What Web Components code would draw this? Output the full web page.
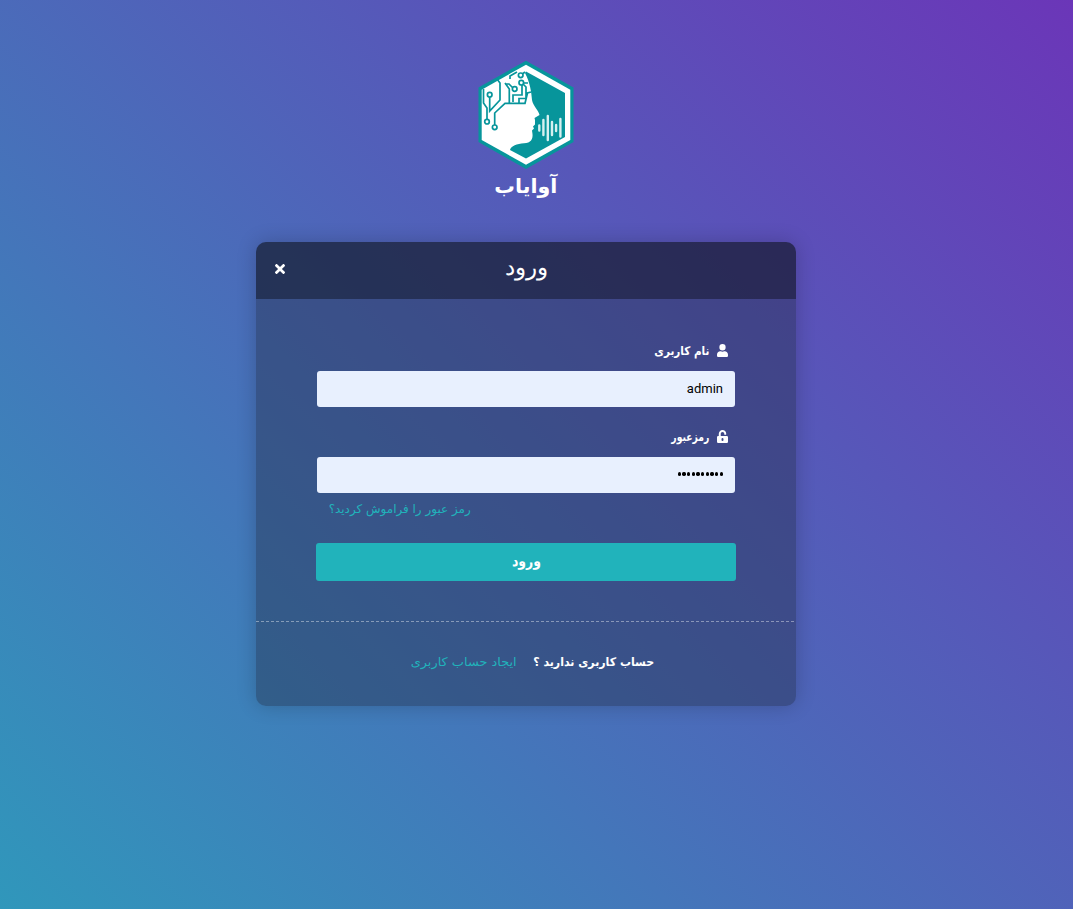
<!DOCTYPE html>
<html lang="fa" dir="rtl">
<head>
<meta charset="utf-8">
<title>ورود</title>
<style>
html{height:100%}
body{margin:0;min-height:100%;font-family:"DejaVu Sans","Liberation Sans",sans-serif;color:#fff;background:linear-gradient(45deg,#3097bb,#6b36b8) no-repeat;height:909px;overflow:hidden}
</style>
</head>
<body>
<login-page></login-page>
<script>
const define = (name, html, ready) => {
  const t = document.createElement('template');
  t.innerHTML = html;
  customElements.define(name, class extends HTMLElement {
    constructor() {
      super();
      this.attachShadow({mode: 'open'}).append(t.content.cloneNode(true));
    }
    connectedCallback() { if (ready) ready(this, this.shadowRoot); }
  });
};

/* Text condensed or widened to a set measure */
define('fit-text', `<style>
:host{display:block;white-space:nowrap;flex:none}
span{display:inline-block;transform-origin:100% 50%}
</style><span><slot></slot></span>`, (host, root) => {
  const w = parseFloat(host.getAttribute('width'));
  const span = root.querySelector('span');
  host.style.width = w + 'px';
  span.style.transform = 'scaleX(' + w / span.getBoundingClientRect().width + ')';
});

define('brand-logo', `<style>
:host{display:flex;flex-direction:column;align-items:center;height:182px}
svg{display:block}
fit-text{font-size:20px;font-weight:700;line-height:28px;margin-top:2px}
</style>
<svg width="96" height="110" viewBox="0 0 96 110">
<path d="M48 .7 95.500 27.500V82L48 109 .500 82V27.500Z" fill="#07959b"/>
<path d="M48 4.700 92.300 29.700V80L48 104.700 3.700 80V29.700Z" fill="#fff"/>
<path d="M48 11.500 87 33V77L48 98.500 32 90C33 86 39 83.500 46 83.200 53 83 55 79 54.500 74L54 70.500 56 68.500 55 66.500 57 64.500V60L56.500 58 61.500 55C61 51 55 46 54 40 53.500 33 52 22 47 13Z" fill="#07959b"/>
<g fill="none" stroke="#07959b" stroke-width="1.700">
<path d="M5.500 29V43L9 48V60M11.700 37V51L22 40V23L19 19M16.700 65V53L27 43.300H47L49.500 33 53 32M27 23 31.300 29V43M27 24H31L35 28M35 42V35H44V25M41 43V38.500H48V27L45 24M32 19V16L39 12M43 15 47 12M45 23H50"/>
<g fill="#fff"><circle cx="11.700" cy="34.700" r="2.300"/><circle cx="9" cy="61.700" r="2.300"/><circle cx="16.700" cy="67.300" r="2.300"/><circle cx="36.700" cy="29" r="2.300"/><circle cx="42.700" cy="15.300" r="2.300"/><circle cx="43.300" cy="22.700" r="2.300"/></g>
</g>
<path d="M61.300 65.500V70.500M65.400 60V75M69.800 56V80M74 62V75M78.100 65V71M82.400 59V76.500" stroke="#d6f0f0" stroke-width="2.400" stroke-linecap="round"/>
</svg>
<fit-text width="63">آوایاب</fit-text>`);

define('ui-icon', `<style>:host{display:block;flex:none}svg{display:block;fill:#fff}</style><svg></svg>`, (host, root) => {
  const icons = {
    user: ['11', '13', '0 0 448 512', 'M224 256A128 128 0 1 0 224 0a128 128 0 0 0 0 256zm90 32h-17a174 174 0 0 1-146 0h-17C60 288 0 348 0 422v42a48 48 0 0 0 48 48h352a48 48 0 0 0 48-48v-42c0-74-60-134-134-134z'],
    unlock: ['11', '13', '0 0 448 512', 'M400 240H152v-88c0-40 32-73 71-73 40 0 73 32 73 72v16a24 24 0 0 0 24 24h32a24 24 0 0 0 24-24v-16C376 67 307 0 223 0 139 0 72 69 72 153v87H48a48 48 0 0 0-48 48v176a48 48 0 0 0 48 48h352a48 48 0 0 0 48-48V288a48 48 0 0 0-48-48zM264 396a40 40 0 0 1-80 0v-40a40 40 0 0 1 80 0z'],
    close: ['10', '10', '0 0 352 352', 'M243 176 343 76c12-12 12-32 0-44L321 9c-12-12-32-12-45 0L176 109 76 9C64-3 44-3 32 9L9 32c-12 12-12 32 0 44l100 100L9 276c-12 12-12 32 0 45l23 22c12 12 32 12 44 0l100-100 100 100c13 12 33 12 45 0l22-22c12-13 12-33 0-45z']
  };
  const [w, h, box, d] = icons[host.getAttribute('name') || 'user'];
  const svg = root.querySelector('svg');
  svg.setAttribute('width', w);
  svg.setAttribute('height', h);
  svg.setAttribute('viewBox', box);
  svg.setAttribute('preserveAspectRatio', 'none');
  svg.innerHTML = '<path d="' + d + '"/>';
});

define('card-header', `<style>
:host{display:grid;grid-template-columns:1fr auto 1fr;height:57px;background:rgba(0,0,0,.36);box-sizing:border-box;padding:0 19px}
ui-icon{justify-self:end;margin-top:22px}
fit-text{font-family:"DejaVu Sans Light","DejaVu Sans",sans-serif;font-size:23px;line-height:30px;margin-top:10px;font-weight:200}
</style><i></i><fit-text width="43"><slot></slot></fit-text><ui-icon name="close"></ui-icon>`);

define('form-field', `<style>
:host{display:block}
.label{display:flex;align-items:center;gap:8px;height:19px;padding:0 7px 1px 0;font-size:12px;font-weight:700}
.box{display:flex;align-items:center;height:36px;box-sizing:border-box;margin-top:10px;padding:0 12px 2px;background:#e8f0fe;border-radius:3px;color:#000;font:13px Roboto,sans-serif}
</style>
<div class="label"><ui-icon></ui-icon><slot name="label"></slot></div>
<div class="box"><slot></slot></div>`, (host, root) => {
  const old = root.querySelector('ui-icon');
  const icon = document.createElement('ui-icon');
  icon.setAttribute('name', host.getAttribute('icon'));
  old.replaceWith(icon);
});

define('password-dots', `<style>
:host{display:flex;gap:1.500px;direction:ltr}
i{width:3.200px;height:3.400px;border-radius:50%;background:#000}
</style>`, (host, root) => {
  for (let n = 0; n < 10; n++) root.append(document.createElement('i'));
});

define('submit-button', `<style>
:host{display:flex;justify-content:center;height:38px;border-radius:3px;background:#21b3bb}
fit-text{font-size:15px;font-weight:700;line-height:36px}
</style><fit-text width="29"><slot></slot></fit-text>`);

define('login-card', `<style>
:host{display:block;width:540px;height:464px;border-radius:10px;overflow:hidden;background:rgba(32,42,64,.4);box-shadow:0 0 20px rgba(0,0,0,.2)}
form{display:block;height:322px;box-sizing:border-box;padding:42px 61px 0;margin:0}
form-field + form-field{margin-top:20px}
.forgot{display:flex;justify-content:flex-end;padding-left:12px;height:24px;margin-top:5px;font-size:12px;line-height:22px;color:#21b3bb}
submit-button{margin:21px -1px 0}
footer{display:flex;justify-content:center;gap:17px;height:85px;box-sizing:border-box;padding:30px 0 0 13px;background:repeating-linear-gradient(90deg,rgba(255,255,255,.4) 0 3px,transparent 3px 5px) 0 0/100% 1px no-repeat;font-size:12px;line-height:22px}
footer fit-text:last-child{color:#21b3bb}
footer fit-text:first-child{font-weight:700}
</style>
<card-header>ورود</card-header>
<form>
<form-field icon="user"><fit-text slot="label" width="55">نام کاربری</fit-text>admin</form-field>
<form-field icon="unlock"><fit-text slot="label" width="38">رمزعبور</fit-text><password-dots></password-dots></form-field>
<div class="forgot"><fit-text width="142">رمز عبور را فراموش کردید؟</fit-text></div>
<submit-button>ورود</submit-button>
</form>
<footer><fit-text width="121">حساب کاربری ندارید ؟</fit-text><fit-text width="106">ایجاد حساب کاربری</fit-text></footer>`);

define('login-page', `<style>
:host{display:flex;flex-direction:column;align-items:center;width:540px;margin:0 277px 0 256px;padding-top:60px}
</style><brand-logo></brand-logo><login-card></login-card>`);
</script>
</body>
</html>
